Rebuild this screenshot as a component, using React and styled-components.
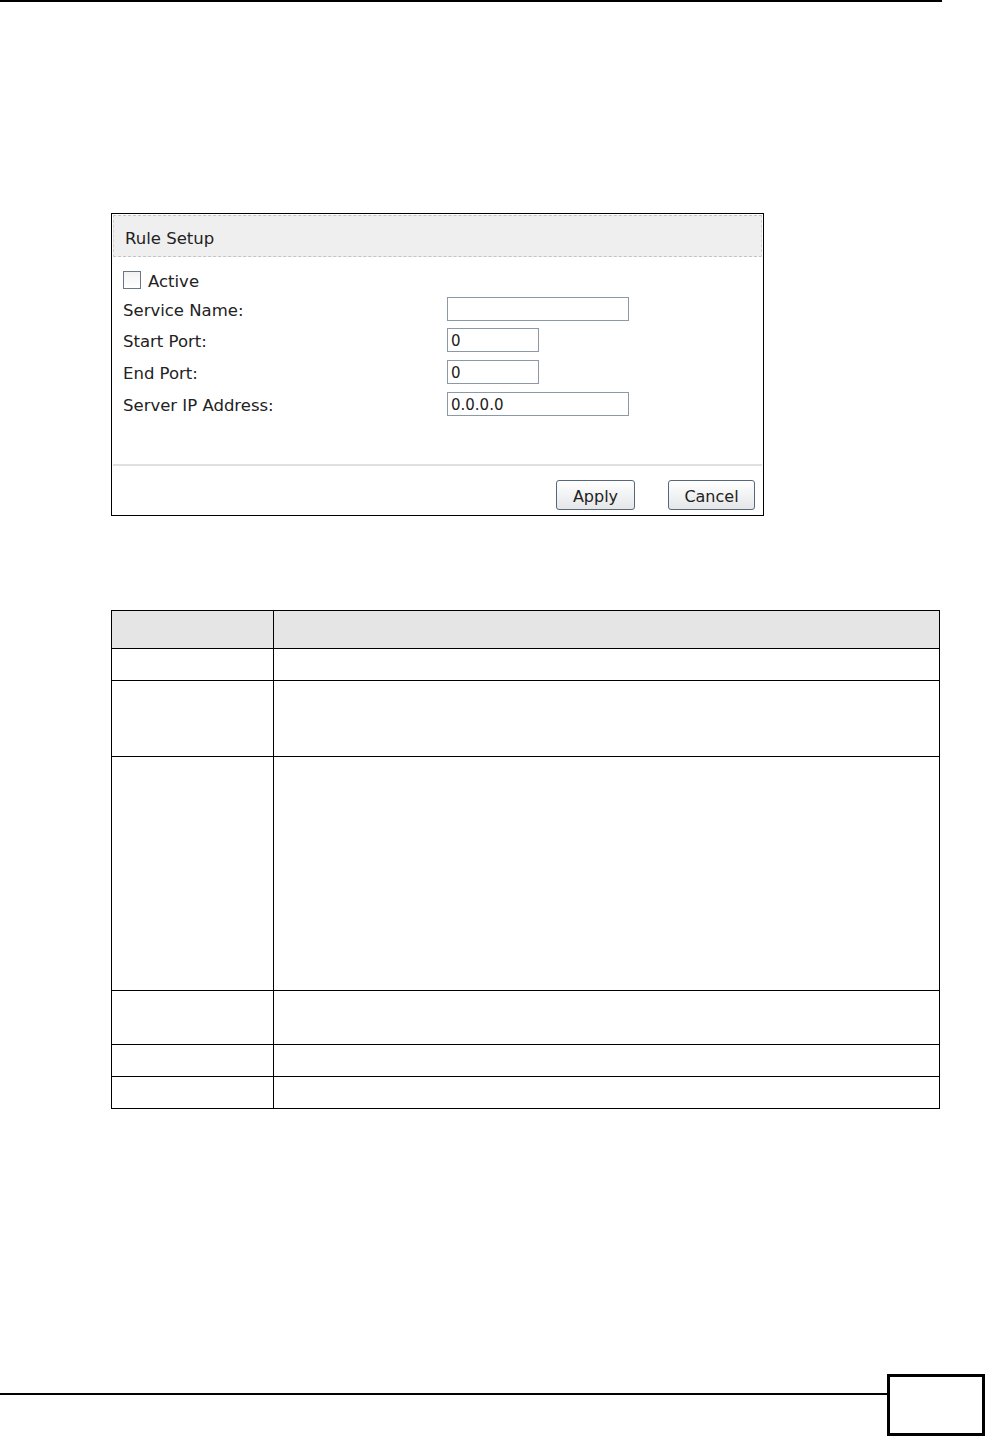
import React from "react";
import styled, { createGlobalStyle } from "styled-components";

const Global = createGlobalStyle`
  html, body { margin: 0; padding: 0; background: #fff; }
  body { font-family: "DejaVu Sans", "Liberation Sans", sans-serif; }
`;

const Page = styled.div`
  width: 987px;
  height: 1438px;
  display: flex;
  flex-direction: column;
  background: #fff;
  overflow: hidden;
`;

const TopRule = styled.div`
  width: 942px;
  height: 2px;
  background: #000;
`;

const Panel = styled.div`
  margin: 211px 0 0 111px;
  width: 653px;
  height: 303px;
  box-sizing: border-box;
  border: 1px solid #000;
  display: flex;
  flex-direction: column;
  padding: 1px;
`;

const PanelHeader = styled.div`
  height: 42px;
  box-sizing: border-box;
  background: #efefef;
  border-top: 1px dashed #c4c4c4;
  border-bottom: 1px dashed #c4c4c4;
  border-left: 1px dashed #d4d4d4;
  border-right: 1px dashed #d4d4d4;
  display: flex;
  align-items: center;
  padding: 4px 0 0 11px;
  font-size: 16.5px;
  color: #222;
`;

const FormGrid = styled.div`
  margin-top: 10px;
  display: grid;
  grid-template-columns: 324px 1fr;
  padding-left: 10px;
  flex: 1;
  align-content: start;
`;

const Row = styled.div`
  grid-column: ${(p) => (p.$full ? "1 / span 2" : "auto")};
  height: ${(p) => p.$h || 31.6}px;
  display: flex;
  align-items: center;
  font-size: 16.5px;
  color: #222;
`;

const Label = styled.span`
  padding-top: 3px;
`;

const Check = styled.span`
  width: 18px;
  height: 18px;
  box-sizing: border-box;
  border: 1px solid #6a7684;
  background: linear-gradient(#f2f2f2, #ffffff);
  margin-right: 7px;
  display: inline-block;
`;

const Input = styled.div`
  width: ${(p) => p.$w}px;
  height: 24px;
  box-sizing: border-box;
  border: 1px solid #8c9aa8;
  background: #fff;
  font-size: 15px;
  color: #222;
  padding: 2px 0 0 3px;
  display: flex;
  align-items: center;
`;

const Separator = styled.div`
  height: 2px;
  background: #e0e0e0;
`;

const ButtonBar = styled.div`
  display: flex;
  justify-content: flex-end;
  gap: 33px;
  padding: 14px 7px 0 0;
  height: 48px;
  box-sizing: border-box;
`;

const Button = styled.div`
  width: ${(p) => p.$w}px;
  height: 30px;
  box-sizing: border-box;
  border: 1px solid #56687a;
  border-radius: 3px;
  background: linear-gradient(#ffffff, #e4e6e8);
  font-size: 16px;
  color: #222;
  display: flex;
  align-items: center;
  justify-content: center;
  padding-top: 3px;
`;

const Table = styled.div`
  margin: 94px 0 0 111px;
  width: 829px;
  display: grid;
  grid-template-columns: 161px 1fr;
  border: 1.5px solid #000;
  border-bottom: none;
  box-sizing: border-box;
`;

const Cell = styled.div`
  height: ${(p) => p.$h}px;
  box-sizing: border-box;
  border-bottom: 1.5px solid #000;
  border-left: ${(p) => (p.$first ? "none" : "1.5px solid #000")};
  background: ${(p) => (p.$head ? "#e5e5e5" : "#fff")};
`;

const Footer = styled.div`
  margin-top: auto;
  margin-bottom: 2px;
  display: flex;
  align-items: flex-start;
`;

const FootLine = styled.div`
  width: 887px;
  height: 2px;
  margin-top: 19px;
  background: #000;
`;

const PageBox = styled.div`
  width: 98px;
  height: 62px;
  box-sizing: border-box;
  border: 3px solid #000;
`;

const rows = [38, 32, 76, 234, 54, 32, 32];

export default function App() {
  return (
    <>
      <Global />
      <Page>
        <TopRule />
        <Panel>
          <PanelHeader>Rule Setup</PanelHeader>
          <FormGrid>
            <Row $full $h={26}>
              <Check />
              <Label>Active</Label>
            </Row>
            <Row><Label>Service Name:</Label></Row>
            <Row>
              <Input $w={182} />
            </Row>
            <Row><Label>Start Port:</Label></Row>
            <Row>
              <Input $w={92}>0</Input>
            </Row>
            <Row><Label>End Port:</Label></Row>
            <Row>
              <Input $w={92}>0</Input>
            </Row>
            <Row><Label>Server IP Address:</Label></Row>
            <Row>
              <Input $w={182}>0.0.0.0</Input>
            </Row>
          </FormGrid>
          <Separator />
          <ButtonBar>
            <Button $w={79}>Apply</Button>
            <Button $w={87}>Cancel</Button>
          </ButtonBar>
        </Panel>
        <Table>
          {rows.map((h, i) => (
            <React.Fragment key={i}>
              <Cell $h={h} $first $head={i === 0} />
              <Cell $h={h} $head={i === 0} />
            </React.Fragment>
          ))}
        </Table>
        <Footer>
          <FootLine />
          <PageBox />
        </Footer>
      </Page>
    </>
  );
}
